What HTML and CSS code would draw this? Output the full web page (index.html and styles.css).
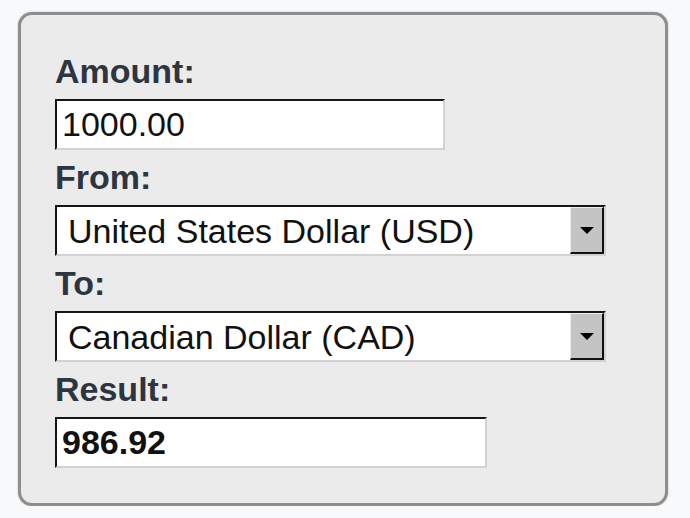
FILE: index.html
```html
<!DOCTYPE html>
<html lang="en">
<head>
    <meta charset="UTF-8">
    <meta name="viewport" content="width=device-width, initial-scale=1.0">
    <title>Currency Converter</title>
    <link rel="stylesheet" href="styles.css">
</head>
<body>
    <div class="converter">
        <label class="field-label" for="amount">Amount:</label>
        <input class="text-box amount" id="amount" type="text" value="1000.00">

        <label class="field-label" for="from">From:</label>
        <div class="select-box">
            <select id="from">
                <option>United States Dollar (USD)</option>
                <option>Canadian Dollar (CAD)</option>
                <option>Euro (EUR)</option>
            </select>
            <span class="drop-btn"><span class="arrow"></span></span>
        </div>

        <label class="field-label" for="to">To:</label>
        <div class="select-box">
            <select id="to">
                <option>Canadian Dollar (CAD)</option>
                <option>United States Dollar (USD)</option>
                <option>Euro (EUR)</option>
            </select>
            <span class="drop-btn"><span class="arrow"></span></span>
        </div>

        <label class="field-label" for="result">Result:</label>
        <input class="text-box result" id="result" type="text" value="986.92" readonly>
    </div>
</body>
</html>
```

FILE: styles.css
```css
body {
    margin: 0;
    font-family: "Liberation Sans", Arial, sans-serif;
    background-color: #f8f9fa;
}
.converter {
    box-sizing: border-box;
    width: 650px;
    height: 494px;
    margin: 12px 0 0 18px;
    padding: 37px 0 0 34px;
    background-color: #ebebeb;
    border: 3px solid #8e8e8e;
    border-radius: 14px;
    box-shadow: 0 0 2px rgba(0, 0, 0, 0.25);
}
.field-label {
    display: block;
    font-size: 34px;
    line-height: 39px;
    font-weight: bold;
    color: #2d3540;
    margin-bottom: 8px;
}
.text-box,
.select-box {
    box-sizing: border-box;
    display: block;
    height: 51px;
    margin: 0 0 8px 0;
    border: 2px solid;
    border-color: #161616 #d2d2d2 #d2d2d2 #161616;
    background-color: white;
}
.text-box {
    padding: 0 5px;
    font-family: "Liberation Sans", Arial, sans-serif;
    font-size: 34px;
    color: #111;
    outline: none;
}
.amount {
    width: 390px;
}
.result {
    width: 432px;
    font-weight: bold;
}
.select-box {
    display: flex;
    width: 551px;
}
.select-box select {
    flex: 1;
    min-width: 0;
    appearance: none;
    -webkit-appearance: none;
    border: none;
    background: transparent;
    padding: 0 0 0 11px;
    font-family: "Liberation Sans", Arial, sans-serif;
    font-size: 34px;
    color: #111;
    outline: none;
}
.drop-btn {
    box-sizing: border-box;
    width: 34px;
    display: flex;
    align-items: center;
    justify-content: center;
    background-color: #c4c4c4;
    border-style: solid;
    border-width: 1px 2px 2px 1px;
    border-color: #eeeeee #111 #111 #eeeeee;
}
.arrow {
    width: 0;
    height: 0;
    border-left: 7px solid transparent;
    border-right: 7px solid transparent;
    border-top: 7px solid #000;
}
```
